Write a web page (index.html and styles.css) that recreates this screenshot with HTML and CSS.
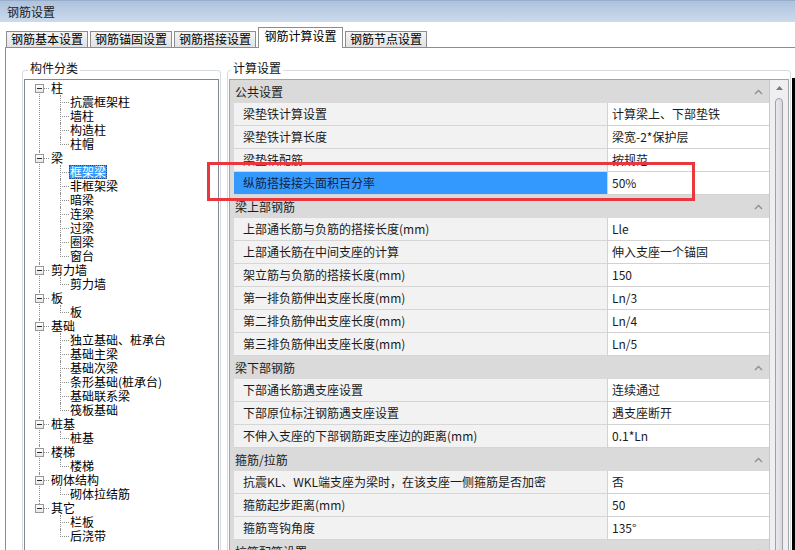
FILE: index.html
```html
<!DOCTYPE html>
<html lang="zh-CN">
<head>
  <meta charset="UTF-8">
  <meta name="viewport" content="width=device-width, initial-scale=1.0">
  <title>钢筋设置</title>
  <link rel="stylesheet" href="styles.css">
</head>
<body>
<div class="window">
  <div class="titlebar">钢筋设置</div>

  <div class="tabs">
    <div class="tab">钢筋基本设置</div>
    <div class="tab">钢筋锚固设置</div>
    <div class="tab">钢筋搭接设置</div>
    <div class="tab active">钢筋计算设置</div>
    <div class="tab">钢筋节点设置</div>
  </div>

  <div class="panel">
    <!-- left: component tree -->
    <fieldset class="group tree-group">
      <legend>构件分类</legend>
      <ul class="tree">
        <li>
          <div class="node"><span class="toggle"></span><span class="hline"></span><span class="label">柱</span></div>
          <ul class="children">
            <li><span class="label">抗震框架柱</span></li>
            <li><span class="label">墙柱</span></li>
            <li><span class="label">构造柱</span></li>
            <li><span class="label">柱帽</span></li>
          </ul>
        </li>
        <li>
          <div class="node"><span class="toggle"></span><span class="hline"></span><span class="label">梁</span></div>
          <ul class="children">
            <li><span class="label selected">框架梁</span></li>
            <li><span class="label">非框架梁</span></li>
            <li><span class="label">暗梁</span></li>
            <li><span class="label">连梁</span></li>
            <li><span class="label">过梁</span></li>
            <li><span class="label">圈梁</span></li>
            <li><span class="label">窗台</span></li>
          </ul>
        </li>
        <li>
          <div class="node"><span class="toggle"></span><span class="hline"></span><span class="label">剪力墙</span></div>
          <ul class="children">
            <li><span class="label">剪力墙</span></li>
          </ul>
        </li>
        <li>
          <div class="node"><span class="toggle"></span><span class="hline"></span><span class="label">板</span></div>
          <ul class="children">
            <li><span class="label">板</span></li>
          </ul>
        </li>
        <li>
          <div class="node"><span class="toggle"></span><span class="hline"></span><span class="label">基础</span></div>
          <ul class="children">
            <li><span class="label">独立基础、桩承台</span></li>
            <li><span class="label">基础主梁</span></li>
            <li><span class="label">基础次梁</span></li>
            <li><span class="label">条形基础(桩承台)</span></li>
            <li><span class="label">基础联系梁</span></li>
            <li><span class="label">筏板基础</span></li>
          </ul>
        </li>
        <li>
          <div class="node"><span class="toggle"></span><span class="hline"></span><span class="label">桩基</span></div>
          <ul class="children">
            <li><span class="label">桩基</span></li>
          </ul>
        </li>
        <li>
          <div class="node"><span class="toggle"></span><span class="hline"></span><span class="label">楼梯</span></div>
          <ul class="children">
            <li><span class="label">楼梯</span></li>
          </ul>
        </li>
        <li>
          <div class="node"><span class="toggle"></span><span class="hline"></span><span class="label">砌体结构</span></div>
          <ul class="children">
            <li><span class="label">砌体拉结筋</span></li>
          </ul>
        </li>
        <li>
          <div class="node"><span class="toggle"></span><span class="hline"></span><span class="label">其它</span></div>
          <ul class="children">
            <li><span class="label">栏板</span></li>
            <li><span class="label">后浇带</span></li>
          </ul>
        </li>
      </ul>
    </fieldset>

    <!-- right: property grid -->
    <fieldset class="group grid-group">
      <legend>计算设置</legend>
      <div class="grid-box">
        <div class="grid">
          <div class="cat"><span>公共设置</span><svg class="caret" width="9" height="6" viewBox="0 0 9 6"><path d="M1 5 4.5 1.5 8 5" /></svg></div>
          <div class="prop"><div class="name">梁垫铁计算设置</div><div class="value">计算梁上、下部垫铁</div></div>
          <div class="prop"><div class="name">梁垫铁计算长度</div><div class="value">梁宽-2*保护层</div></div>
          <div class="prop"><div class="name">梁垫铁配筋</div><div class="value">按规范</div></div>
          <div class="prop sel"><div class="name">纵筋搭接接头面积百分率</div><div class="value">50%</div></div>

          <div class="cat"><span>梁上部钢筋</span><svg class="caret" width="9" height="6" viewBox="0 0 9 6"><path d="M1 5 4.5 1.5 8 5" /></svg></div>
          <div class="prop"><div class="name">上部通长筋与负筋的搭接长度(mm)</div><div class="value">Lle</div></div>
          <div class="prop"><div class="name">上部通长筋在中间支座的计算</div><div class="value">伸入支座一个锚固</div></div>
          <div class="prop"><div class="name">架立筋与负筋的搭接长度(mm)</div><div class="value">150</div></div>
          <div class="prop"><div class="name">第一排负筋伸出支座长度(mm)</div><div class="value">Ln/3</div></div>
          <div class="prop"><div class="name">第二排负筋伸出支座长度(mm)</div><div class="value">Ln/4</div></div>
          <div class="prop"><div class="name">第三排负筋伸出支座长度(mm)</div><div class="value">Ln/5</div></div>

          <div class="cat"><span>梁下部钢筋</span><svg class="caret" width="9" height="6" viewBox="0 0 9 6"><path d="M1 5 4.5 1.5 8 5" /></svg></div>
          <div class="prop"><div class="name">下部通长筋遇支座设置</div><div class="value">连续通过</div></div>
          <div class="prop"><div class="name">下部原位标注钢筋遇支座设置</div><div class="value">遇支座断开</div></div>
          <div class="prop"><div class="name">不伸入支座的下部钢筋距支座边的距离(mm)</div><div class="value">0.1*Ln</div></div>

          <div class="cat"><span>箍筋/拉筋</span><svg class="caret" width="9" height="6" viewBox="0 0 9 6"><path d="M1 5 4.5 1.5 8 5" /></svg></div>
          <div class="prop"><div class="name">抗震KL、WKL端支座为梁时，在该支座一侧箍筋是否加密</div><div class="value">否</div></div>
          <div class="prop"><div class="name">箍筋起步距离(mm)</div><div class="value">50</div></div>
          <div class="prop"><div class="name">箍筋弯钩角度</div><div class="value">135°</div></div>

          <div class="cat"><span>拉筋配筋设置</span><svg class="caret" width="9" height="6" viewBox="0 0 9 6"><path d="M1 5 4.5 1.5 8 5" /></svg></div>
        </div>
        <div class="scrollbar">
          <svg class="arrow" width="7" height="4" viewBox="0 0 7 4"><path d="M0 4 3.5 0 7 4z" /></svg>
          <div class="thumb"></div>
        </div>
      </div>
    </fieldset>
  </div>

  <div class="mark"></div>
  <div class="edge"></div>
</div>
</body>
</html>
```

FILE: styles.css
```css
* {
  box-sizing: border-box;
}
body {
  margin: 0;
  width: 795px;
  height: 550px;
  overflow: hidden;
  background: #fff;
  font-family: "Noto Sans CJK SC", "Liberation Sans", sans-serif;
  font-size: 12px;
  color: #000;
}
.window {
  position: relative;
  height: 550px;
  overflow: hidden;
}
.titlebar {
  height: 22px;
  line-height: 21px;
  padding-left: 7px;
  color: #1c1c1c;
  background: linear-gradient(#adc2dd, #ccdbec);
  border-top: 1px solid #97adc9;
}

/* tabs */
.tabs {
  display: flex;
  align-items: flex-end;
  gap: 2px;
  height: 25px;
  padding-left: 6px;
}
.tab {
  width: 82px;
  height: 16px;
  line-height: 14px;
  text-align: center;
  border: 1px solid #8d8d8d;
  border-bottom: none;
  background: linear-gradient(#f4f4f4, #e2e2e2);
}
.tab.active {
  position: relative;
  z-index: 1;
  width: 85px;
  height: 21px;
  margin-bottom: -1px;
  padding-top: 1px;
  background: #fff;
}

/* panel */
.panel {
  display: flex;
  gap: 6px;
  height: 503px;
  margin-left: 5px;
  padding: 13px 0 0 16px;
  border-top: 1px solid #8d8d8d;
  border-left: 1px solid #8d8d8d;
  overflow: hidden;
}
.group {
  margin: 0;
  padding: 0 1px;
  border: 1px solid #d5dbe0;
  border-radius: 3px;
  display: flex;
  flex-direction: column;
}
.group legend {
  padding: 0 2px 4px;
  line-height: 14px;
  color: #111;
}
.tree-group {
  width: 199px;
  height: 520px;
}
.tree-group legend {
  margin-left: 4px;
}
.grid-group {
  width: 564px;
  height: 520px;
}
.grid-group legend {
  margin-left: 2px;
}

/* tree */
.tree {
  flex: 1;
  margin: 0;
  padding: 1px 0 0 10px;
  list-style: none;
  line-height: 14px;
  background: #fff;
  border: 1px solid #828790;
}
.tree ul {
  list-style: none;
  margin: 0;
  padding: 0;
}
.tree > li {
  position: relative;
}
.tree > li::before {
  content: '';
  position: absolute;
  left: 4px;
  top: 0;
  bottom: 0;
  border-left: 1px dotted #8e8e8e;
}
.tree > li:first-child::before {
  top: 7px;
}
.tree > li:last-child::before {
  bottom: auto;
  height: 7px;
}
.node {
  display: flex;
  align-items: center;
  height: 14px;
}
.toggle {
  position: relative;
  z-index: 1;
  width: 9px;
  height: 9px;
  border: 1px solid #979797;
  background: linear-gradient(#fff, #e8e8e8);
}
.toggle::after {
  content: '';
  position: absolute;
  left: 1px;
  top: 3px;
  width: 5px;
  height: 1px;
  background: #2a2a2a;
}
.hline {
  width: 5px;
  border-top: 1px dotted #8e8e8e;
}
.label {
  height: 14px;
  line-height: 14px;
  padding: 0 1px;
  white-space: nowrap;
}
.node .label {
  margin-left: 1px;
}
.label.selected {
  background: #3399ff;
  color: #fff;
  outline: 1px dotted #1a4f8c;
  outline-offset: -1px;
}
.children {
  margin-left: 25px !important;
}
.children li {
  position: relative;
  display: flex;
  align-items: center;
  height: 14px;
  padding-left: 9px;
}
.children li::before {
  content: '';
  position: absolute;
  left: 0;
  top: 0;
  width: 8px;
  height: 7px;
  border-left: 1px dotted #8e8e8e;
  border-bottom: 1px dotted #8e8e8e;
}
.children li:not(:last-child)::after {
  content: '';
  position: absolute;
  left: 0;
  top: 7px;
  bottom: 0;
  border-left: 1px dotted #8e8e8e;
}

/* property grid */
.grid-box {
  flex: 1;
  display: flex;
  border: 1px solid #a3a3a3;
  background: #dadada;
}
.grid {
  width: 539px;
}
.cat {
  display: flex;
  justify-content: space-between;
  align-items: center;
  height: 23px;
  padding: 0 6px 0 5px;
  background: #dadada;
  color: #1a1a1a;
}
.caret path {
  fill: none;
  stroke: #8f8f8f;
  stroke-width: 1.4;
}
.prop {
  display: flex;
  height: 23px;
  padding-left: 4px;
  background: #dadada;
}
.prop .name {
  flex: 1;
  padding-left: 9px;
  line-height: 22px;
  white-space: nowrap;
  overflow: hidden;
  background: #f2f2f2;
  border-bottom: 1px solid #d6d6d6;
  color: #1a1a1a;
}
.prop .value {
  width: 162px;
  padding-left: 4px;
  line-height: 22px;
  white-space: nowrap;
  background: #fff;
  border-left: 1px solid #d2d2d2;
  border-bottom: 1px solid #d2d2d2;
  color: #1a1a1a;
}
.prop.sel .name {
  background: #3399ff;
  color: #14233f;
}
.scrollbar {
  width: 19px;
  display: flex;
  flex-direction: column;
  align-items: center;
  padding-top: 6px;
  background: #efeff2;
  border-left: 1px solid #c9c9c9;
}
.arrow path {
  fill: #7a7a7a;
}
.thumb {
  width: 8px;
  flex: 1;
  margin-top: 8px;
  border: 1px solid #a0a0a8;
  border-radius: 4px;
  background: linear-gradient(90deg, #e9e9ee, #d8d8de);
}

/* overlays */
.mark {
  position: absolute;
  left: 207px;
  top: 162px;
  width: 488px;
  height: 39px;
  border: 3px solid #e8383e;
}
.edge {
  position: absolute;
  right: 0;
  top: 78px;
  bottom: 0;
  width: 3px;
  background: #000;
}
```
